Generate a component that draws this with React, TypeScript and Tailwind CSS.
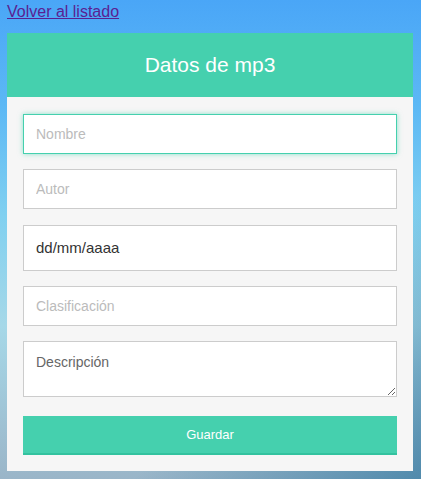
export default function App() {
  return (
    <div className="min-h-screen bg-[image:linear-gradient(135deg,transparent_68%,rgba(50,120,160,0.7)_100%),linear-gradient(180deg,#4aa6f7_0%,#5cb8f5_22%,#80d0f0_45%,#a6d8e8_68%,#9ab5c8_100%)] px-[7px] pt-[3px] font-['Liberation_Sans',Arial,sans-serif]">
      <div className="h-[18px] text-[16px] leading-[18px]">
        <a href="#" className="text-[#5a1f92] underline">
          Volver al listado
        </a>
      </div>

      <div className="mt-[12px] w-[406px] bg-[#f6f6f6]">
        <div className="flex h-[64px] items-center justify-center bg-[#45d0ae]">
          <h2 className="text-[21px] text-white">Datos de mp3</h2>
        </div>

        <form className="flex flex-col px-4 pt-[17px] pb-4">
          <input
            type="text"
            placeholder="Nombre"
            className="h-[40px] border border-[#45d0ae] bg-white px-3 text-[14px] shadow-[0_0_5px_rgba(69,208,174,0.6)] outline-none placeholder:text-[#bbb]"
          />
          <input
            type="text"
            placeholder="Autor"
            className="mt-[15px] h-[40px] border border-[#ccc] bg-white px-3 text-[14px] outline-none placeholder:text-[#bbb]"
          />
          <div className="mt-[16px] flex h-[46px] items-center border border-[#ccc] bg-white px-3 text-[15px] text-[#333]">
            dd/mm/aaaa
          </div>
          <input
            type="text"
            placeholder="Clasificación"
            className="mt-[15px] h-[40px] border border-[#ccc] bg-white px-3 text-[14px] outline-none placeholder:text-[#bbb]"
          />
          <textarea
            placeholder="Descripción"
            className="mt-[15px] h-[56px] border border-[#ccc] bg-white px-3 py-[10px] text-[14px] outline-none placeholder:text-[#666]"
          />
          <button
            type="submit"
            className="mt-[19px] h-[39px] border-b-2 border-[#33c29f] bg-[#45d0ae] text-[13px] text-white"
          >
            Guardar
          </button>
        </form>
      </div>
    </div>
  )
}
